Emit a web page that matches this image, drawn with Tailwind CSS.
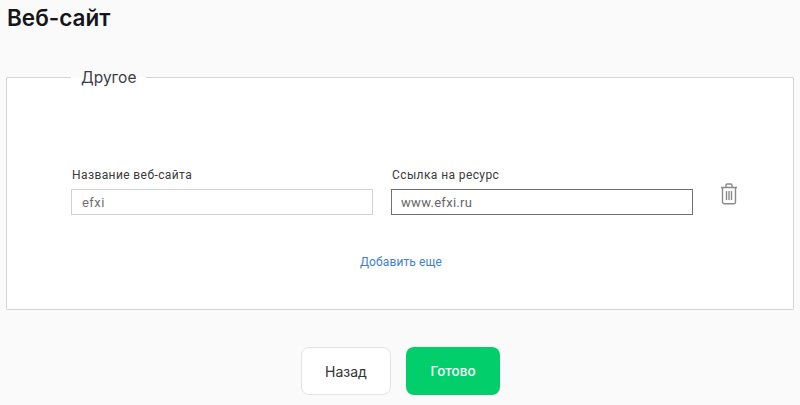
<!DOCTYPE html>
<html lang="ru">
<head>
<meta charset="utf-8">
<script src="https://cdn.jsdelivr.net/npm/@tailwindcss/browser@4"></script>
</head>
<body class="w-[800px] h-[405px] overflow-hidden bg-[#fafafa] font-['Inter','Roboto',sans-serif]">
<div class="pl-[6px] pr-[6px]">
  <h1 class="pl-px pt-[3px] h-[77px] text-[22.5px] leading-[30px] font-semibold text-[#16161a]">Веб-сайт</h1>
  <fieldset class="h-[243px] -mt-[10px] border border-[#d4d4d4] bg-white pl-[64px] pr-[40px] rounded-[1px]">
    <legend class="px-[10px] pt-[2px] ml-0 text-[15.5px] leading-[18px] text-[#3c3c44] font-normal">Другое</legend>
    <div class="flex items-start pt-[80px] font-['Roboto',sans-serif]">
      <label class="block w-[302px]">
        <span class="block pl-px text-[12px] leading-[16px] tracking-[0.4px] text-[#3a3a3a] mb-[6px]">Название веб-сайта</span>
        <input value="efxi" class="block w-full h-[26px] px-[10px] border border-[#d2d2d2] bg-white text-[13px] tracking-[0.45px] text-[#707070] outline-none">
      </label>
      <label class="block w-[302px] ml-[18px]">
        <span class="block pl-px text-[12px] leading-[16px] tracking-[0.4px] text-[#3a3a3a] mb-[6px]">Ссылка на ресурс</span>
        <input value="www.efxi.ru" class="block w-full h-[26px] px-[9px] border border-[#707070] bg-white text-[13px] tracking-[0.3px] text-[#666] outline-none">
      </label>
      <button class="ml-[27px] mt-[16px] text-[#8a8a8a]" aria-label="Удалить">
        <svg width="18" height="22" viewBox="0 0 18 22" fill="none" stroke="currentColor" stroke-width="1.4" class="block">
          <path d="M1 4.5h16M6 4.5V2.2C6 1.5 6.5 1 7.2 1h3.6c.7 0 1.2.5 1.2 1.2v2.3M2.5 4.5v14.6c0 1 .7 1.7 1.7 1.7h9.6c1 0 1.7-.7 1.7-1.7V4.5M6.5 8v9M9 8v9M11.5 8v9"/>
        </svg>
      </button>
    </div>
    <div class="pt-[39px] pl-[289px] text-[12px] leading-[16px] tracking-[0.1px] text-[#3f7fd0] font-['Roboto',sans-serif]"><a href="#">Добавить еще</a></div>
  </fieldset>
  <div class="flex justify-center gap-[15px] mt-[37px] pl-[1px]">
    <button class="w-[90px] h-[48px] rounded-[8px] border border-[#e4e4e4] bg-white text-[14px] text-[#333]">Назад</button>
    <button class="w-[94px] h-[48px] rounded-[8px] bg-[#02cf6c] text-[13.5px] font-medium text-white">Готово</button>
  </div>
</div>
</body>
</html>
